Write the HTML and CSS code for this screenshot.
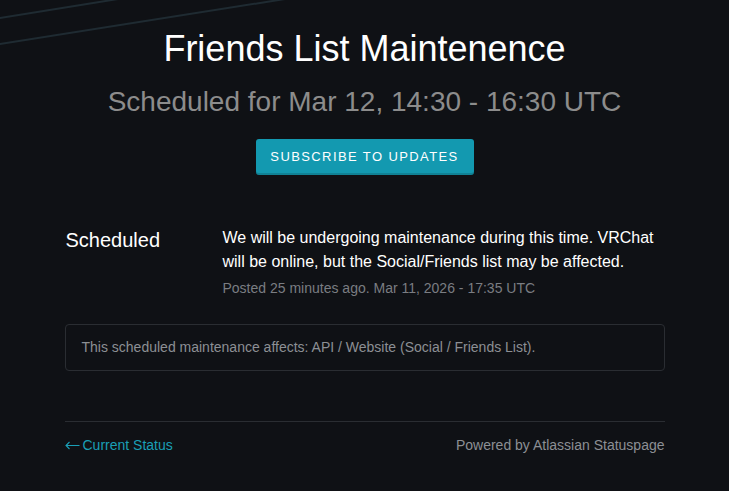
FILE: index.html
```html
<!DOCTYPE html>
<html lang="en">
<head>
<meta charset="utf-8">
<title>Friends List Maintenence</title>
<link rel="stylesheet" href="styles.css">
</head>
<body>
<svg class="bg-lines" width="300" height="60" viewBox="0 0 300 60" aria-hidden="true">
  <line x1="-5" y1="18.8" x2="118" y2="-1" stroke="#1f2b32" stroke-width="2"/>
  <line x1="-5" y1="44.8" x2="285" y2="-1" stroke="#1f2b32" stroke-width="2"/>
</svg>
<div class="page">
  <header class="header">
    <h1 class="title">Friends List Maintenence</h1>
    <div class="subtitle">Scheduled for Mar 12, 14:30 - 16:30 UTC</div>
    <a class="subscribe" href="#">Subscribe to Updates</a>
  </header>

  <section class="update">
    <div class="update-label">Scheduled</div>
    <div class="update-body">
      <div class="update-text">We will be undergoing maintenance during this time. VRChat will be online, but the Social/Friends list may be affected.</div>
      <div class="update-meta">Posted 25 minutes ago. Mar 11, 2026 - 17:35 UTC</div>
    </div>
  </section>

  <div class="affects">This scheduled maintenance affects: API / Website (Social / Friends List).</div>

  <footer class="footer">
    <a class="back" href="#"><svg class="arrow" width="15" height="9" viewBox="0 0 15 9" aria-hidden="true"><path d="M14.5 4.5H1M4.5 1L1 4.5L4.5 8" fill="none" stroke="currentColor" stroke-width="1.1"/></svg>Current Status</a>
    <span class="powered">Powered by Atlassian Statuspage</span>
  </footer>
</div>
</body>
</html>
```

FILE: styles.css
```css
* { box-sizing: border-box; }
html, body {
  margin: 0;
  padding: 0;
  background: #0f1115;
}
body {
  font-family: "Liberation Sans", Arial, sans-serif;
  color: #ffffff;
  position: relative;
  min-height: 491px;
}
.bg-lines {
  position: absolute;
  top: 0;
  left: 0;
}
.page {
  width: 600px;
  margin: 0 auto;
  padding-top: 29px;
}
.header {
  display: flex;
  flex-direction: column;
  align-items: center;
}
.title {
  margin: 0;
  font-size: 36px;
  font-weight: 400;
  line-height: 40px;
  color: #ffffff;
}
.subtitle {
  margin-top: 16px;
  font-size: 28px;
  line-height: 34px;
  color: #8c8c8c;
}
.subscribe {
  margin-top: 20px;
  display: inline-block;
  width: 218px;
  height: 36px;
  line-height: 36px;
  text-align: center;
  background: #1399b0;
  border-radius: 3px;
  color: #ffffff;
  text-decoration: none;
  text-transform: uppercase;
  font-size: 13px;
  letter-spacing: 1.4px;
  box-shadow: inset 0 -2px 0 rgba(0,0,0,0.15);
}
.update {
  display: flex;
  margin-top: 51px;
  padding-left: 1px;
}
.update-label {
  width: 157px;
  flex: none;
  font-size: 20px;
  line-height: 24px;
  padding-top: 2px;
}
.update-body {
  flex: 1;
}
.update-text {
  font-size: 16px;
  line-height: 24px;
  color: #ffffff;
}
.update-meta {
  margin-top: 4px;
  font-size: 14px;
  line-height: 20px;
  color: #7a7d82;
}
.affects {
  margin-top: 26px;
  border: 1px solid #2a2d32;
  border-radius: 4px;
  padding: 13px 16px 13px;
  font-size: 14px;
  line-height: 19px;
  color: #8c8f94;
}
.footer {
  margin-top: 50px;
  border-top: 1px solid #2a2d32;
  padding-top: 14px;
  display: flex;
  justify-content: space-between;
  font-size: 14px;
  line-height: 18px;
}
.back {
  display: flex;
  align-items: center;
  gap: 3px;
  color: #1a9fb6;
  text-decoration: none;
}
.arrow {
  flex: none;
  margin-top: 1px;
}
.powered {
  color: #8c8f94;
}
```
